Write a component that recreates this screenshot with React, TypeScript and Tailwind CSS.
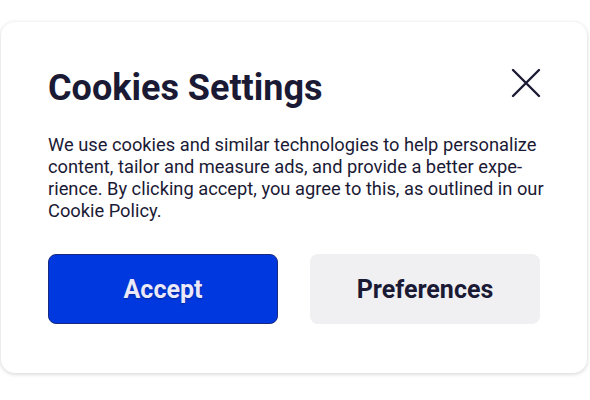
export default function App() {
  return (
    <div className="w-[590px] h-[400px] bg-white pt-[22px] pl-[1px] font-['Roboto',sans-serif]">
      <div className="w-[586px] h-[351px] rounded-[14px] bg-white shadow-[0_1px_4px_rgba(0,0,0,0.18)] px-[47px] pt-[44px]">
        <div className="flex items-start justify-between">
          <h1 className="text-[36px] leading-[44px] font-bold text-[#1b1a35]">Cookies Settings</h1>
          <button className="mt-[2px] mr-[-1px] text-[#1b1a35]">
            <svg width="30" height="30" viewBox="0 0 30 30" fill="none" stroke="currentColor" strokeWidth="2.4" strokeLinecap="round">
              <path d="M2 2 L28 28 M28 2 L2 28" />
            </svg>
          </button>
        </div>
        <p className="mt-[24px] whitespace-nowrap text-[18.3px] leading-[22px] text-[#1b1a35]">
          We use cookies and similar technologies to help personalize
          <br />
          content, tailor and measure ads, and provide a better expe-
          <br />
          rience. By clicking accept, you agree to this, as outlined in our
          <br />
          Cookie Policy.
        </p>
        <div className="mt-[32px] grid grid-cols-2 gap-[32px]">
          <button className="h-[70px] rounded-[8px] bg-[#0038e0] border border-[#1a2a80] pt-[2px] text-[25px] font-bold text-[#ebe8fa] [text-shadow:0_1px_2px_rgba(0,0,0,0.35)]">
            Accept
          </button>
          <button className="h-[70px] rounded-[8px] bg-[#f0f0f3] pt-[2px] text-[25px] font-bold text-[#1b1a35]">
            Preferences
          </button>
        </div>
      </div>
    </div>
  );
}
